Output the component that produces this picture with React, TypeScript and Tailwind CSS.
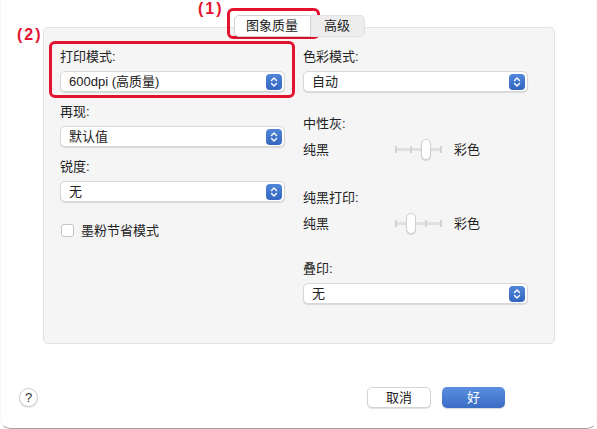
import React from 'react';

const font = { fontFamily: '"Liberation Sans", "Noto Sans CJK SC", sans-serif' };

function PopupArrow() {
  return (
    <span className="flex h-[16px] w-[16px] items-center justify-center rounded-[4px] bg-gradient-to-b from-[#4f86d9] to-[#3466c0]">
      <svg width="8" height="12" viewBox="0 0 8 12" fill="none">
        <path d="M1.5 4.5 L4 2 L6.5 4.5" stroke="white" strokeWidth="1.4" strokeLinecap="round" strokeLinejoin="round" />
        <path d="M1.5 7.5 L4 10 L6.5 7.5" stroke="white" strokeWidth="1.4" strokeLinecap="round" strokeLinejoin="round" />
      </svg>
    </span>
  );
}

function Popup({ value }: { value: string }) {
  return (
    <div className="mt-[6px] flex h-[21px] w-[225px] items-center justify-between rounded-[5px] border border-[#d8d8d8] bg-white pl-[8px] pr-[2px] text-[13px] text-[#222] shadow-[0_1px_1px_rgba(0,0,0,0.12)]">
      <span>{value}</span>
      <PopupArrow />
    </div>
  );
}

function Label({ text, className = '' }: { text: string; className?: string }) {
  return <div className={`h-[16px] text-[13px] leading-[16px] text-[#222] ${className}`}>{text}</div>;
}

function Slider({ pos }: { pos: number }) {
  // pos = index of tick the thumb sits on (0..3)
  const ticks = [0, 15, 30, 45];
  return (
    <div className="relative h-[21px] w-[47px]">
      <div className="absolute left-0 right-0 top-[9px] h-[3px] rounded bg-[#e0e0e0]" />
      {ticks.map((t) => (
        <div key={t} className="absolute top-[7px] h-[7px] w-[1.5px] bg-[#d4d4d4]" style={{ left: t }} />
      ))}
      <div
        className="absolute top-0 h-[21px] w-[10px] rounded-[5px] border border-[#cfcfcf] bg-white shadow-[0_1px_1px_rgba(0,0,0,0.15)]"
        style={{ left: ticks[pos] - 4 }}
      />
    </div>
  );
}

function SliderRow({ pos }: { pos: number }) {
  return (
    <div className="flex h-[21px] items-center text-[13px] text-[#222]">
      <span className="w-[92px]">纯黑</span>
      <Slider pos={pos} />
      <span className="ml-[12px]">彩色</span>
    </div>
  );
}

export default function App() {
  return (
    <div style={font} className="relative h-[429px] w-[597px] overflow-hidden bg-white">
      {/* window outline, only the bottom edge shows */}
      <div className="pointer-events-none absolute inset-x-0 -top-[12px] bottom-0 rounded-b-[10px] border-b-[1.5px] border-l-[1px] border-r-[1px] border-b-[#a4a4a4] border-l-[#f6f6f6] border-r-[#f6f6f6]" />

      <div className="flex flex-col pt-[15px]">
        {/* tabs */}
        <div className="relative z-10 flex justify-center pl-[1px]">
          <div className="flex h-[22px] w-[77px] items-center justify-center rounded-l-[5px] border border-[#d2d2d2] bg-white text-[13px] text-[#222] shadow-[0_1px_1px_rgba(0,0,0,0.1)]">
            图象质量
          </div>
          <div className="flex h-[22px] w-[54px] items-center justify-center rounded-r-[5px] border border-l-0 border-[#e0e0e0] bg-[#ededed] text-[13px] text-[#222]">
            高级
          </div>
        </div>

        {/* panel */}
        <div className="ml-[43px] mt-[-10px] flex h-[317px] w-[512px] gap-[18px] rounded-[5px] border border-[#e2e2e2] bg-[#f5f5f5] pl-[16px] pt-[21px]">
          <div className="flex w-[225px] flex-col">
            <Label text="打印模式:" />
            <Popup value="600dpi (高质量)" />
            <Label text="再现:" className="mt-[12px]" />
            <Popup value="默认值" />
            <Label text="锐度:" className="mt-[12px]" />
            <Popup value="无" />
            <div className="mt-[19px] flex items-center gap-[7px] pl-[1px] text-[13px] text-[#222]">
              <span className="h-[13px] w-[13px] rounded-[3px] border border-[#c4c4c4] bg-white" />
              <span>墨粉节省模式</span>
            </div>
          </div>

          <div className="flex w-[225px] flex-col">
            <Label text="色彩模式:" />
            <Popup value="自动" />
            <Label text="中性灰:" className="mt-[24px]" />
            <div className="mt-[7px]">
              <SliderRow pos={2} />
            </div>
            <Label text="纯黑打印:" className="mt-[30px]" />
            <div className="mt-[7px]">
              <SliderRow pos={1} />
            </div>
            <Label text="叠印:" className="mt-[27px]" />
            <Popup value="无" />
          </div>
        </div>

        {/* bottom bar */}
        <div className="mt-[43px] flex items-center pl-[19px] pr-[92px]">
          <div className="flex h-[19px] w-[19px] items-center justify-center rounded-full border border-[#cfcfcf] bg-white text-[13px] text-[#333] shadow-[0_1px_1px_rgba(0,0,0,0.12)]">
            ?
          </div>
          <div className="flex-1" />
          <button className="flex h-[21px] w-[64px] items-center justify-center rounded-[5px] border border-[#d4d4d4] bg-white text-[13px] text-[#222] shadow-[0_1px_1px_rgba(0,0,0,0.12)]">
            取消
          </button>
          <button className="ml-[11px] flex h-[21px] w-[63px] items-center justify-center rounded-[5px] bg-gradient-to-b from-[#5a8fe0] to-[#3b6cc4] text-[13px] text-white shadow-[0_1px_1px_rgba(0,0,0,0.15)]">
            好
          </button>
        </div>
      </div>

      {/* annotations */}
      <div className="pointer-events-none absolute left-[227px] top-[8px] h-[31px] w-[93px] rounded-[6px] border-[3px] border-[#e3132f]" />
      <div className="pointer-events-none absolute left-[49px] top-[41px] h-[57px] w-[246px] rounded-[6px] border-[3px] border-[#e3132f]" />
      <div className="absolute left-[198px] top-[1px] text-[16px] font-bold leading-[16px] tracking-[2px] text-[#e3132f]">(1)</div>
      <div className="absolute left-[17px] top-[27px] text-[16px] font-bold leading-[16px] tracking-[2px] text-[#e3132f]">(2)</div>
    </div>
  );
}
